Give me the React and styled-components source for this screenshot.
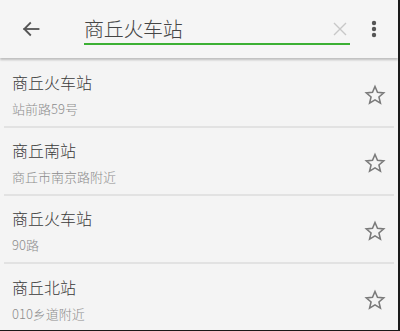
import React from 'react';
import styled, { createGlobalStyle } from 'styled-components';

const GlobalStyle = createGlobalStyle`
  html, body {
    margin: 0;
    padding: 0;
    background: #f4f4f4;
  }
  body {
    font-family: "Noto Sans CJK SC", "Noto Sans", Roboto, sans-serif;
  }
`;

const Screen = styled.div`
  width: 400px;
  height: 331px;
  box-sizing: border-box;
  background: #f4f4f4;
  border-right: 2px solid #1a1a1a;
  border-bottom: 1px solid #1a1a1a;
  overflow: hidden;
  display: flex;
  flex-direction: column;
`;

const Toolbar = styled.header`
  height: 58px;
  flex-shrink: 0;
  display: flex;
  align-items: center;
  background: #f5f5f5;
  box-shadow: 0 2px 2px rgba(0, 0, 0, 0.22);
  position: relative;
  z-index: 1;
`;

const IconButton = styled.button`
  border: 0;
  background: none;
  padding: 0;
  width: ${p => p.$w}px;
  height: 40px;
  display: flex;
  align-items: center;
  justify-content: center;
  color: #555;
  flex-shrink: 0;
`;

const SearchField = styled.div`
  flex: 1;
  height: 35px;
  margin: 0 0 3px 22px;
  display: flex;
  align-items: center;
  border-bottom: 2px solid #3cb034;
  box-sizing: border-box;
  padding-top: 4px;
`;

const SearchText = styled.span`
  flex: 1;
  font-size: 20px;
  font-weight: 300;
  color: #454545;
  letter-spacing: -0.3px;
`;

const ClearButton = styled.span`
  width: 14px;
  height: 14px;
  margin-right: 3px;
  display: flex;
  color: #c8c8c8;
`;

const List = styled.ul`
  list-style: none;
  margin: 2px 4px 0 4px;
  padding: 0;
  flex: 1;
`;

const Row = styled.li`
  height: 68px;
  box-sizing: border-box;
  display: flex;
  align-items: center;
  padding: 0 8px 0 8px;
  border-bottom: 2px solid #e2e2e2;
  &:last-child {
    border-bottom: 0;
  }
`;

const Texts = styled.div`
  flex: 1;
  display: flex;
  flex-direction: column;
  gap: 8px;
  padding-top: 3px;
`;

const Title = styled.div`
  font-size: 16px;
  font-weight: 300;
  line-height: 20px;
  color: #3a3a3a;
`;

const Subtitle = styled.div`
  font-size: 13px;
  font-weight: 300;
  line-height: 18px;
  color: #8c8c8c;
`;

const Star = styled.span`
  width: 22px;
  height: 22px;
  display: flex;
  color: #7a7a7a;
  margin-top: 4px;
`;

const BackArrow = () => (
  <svg width="20" height="20" viewBox="0 0 24 24" fill="none" stroke="currentColor" strokeWidth="2.2" strokeLinecap="square">
    <path d="M21 12H4" />
    <path d="M11 5l-7 7 7 7" />
  </svg>
);

const MoreDots = () => (
  <svg width="6" height="18" viewBox="0 0 6 18" fill="currentColor">
    <circle cx="3" cy="3" r="2.2" />
    <circle cx="3" cy="9" r="2.2" />
    <circle cx="3" cy="15" r="2.2" />
  </svg>
);

const ClearIcon = () => (
  <svg width="14" height="14" viewBox="0 0 14 14" stroke="currentColor" strokeWidth="1.4">
    <path d="M1 1l12 12M13 1L1 13" />
  </svg>
);

const StarIcon = () => (
  <svg width="22" height="22" viewBox="0 0 24 24" fill="none" stroke="currentColor" strokeWidth="1.7" strokeLinejoin="miter">
    <path d="M12 2.8l2.7 6.3 6.8.6-5.2 4.5 1.6 6.7L12 17.3l-5.9 3.6 1.6-6.7-5.2-4.5 6.8-.6z" />
  </svg>
);

const places = [
  { name: '商丘火车站', addr: '站前路59号' },
  { name: '商丘南站', addr: '商丘市南京路附近' },
  { name: '商丘火车站', addr: '90路' },
  { name: '商丘北站', addr: '010乡道附近' },
];

const App = () => (
  <Screen>
    <GlobalStyle />
    <Toolbar>
      <IconButton $w={62}>
        <BackArrow />
      </IconButton>
      <SearchField>
        <SearchText>商丘火车站</SearchText>
        <ClearButton>
          <ClearIcon />
        </ClearButton>
      </SearchField>
      <IconButton $w={48}>
        <MoreDots />
      </IconButton>
    </Toolbar>
    <List>
      {places.map((p, i) => (
        <Row key={i}>
          <Texts>
            <Title>{p.name}</Title>
            <Subtitle>{p.addr}</Subtitle>
          </Texts>
          <Star>
            <StarIcon />
          </Star>
        </Row>
      ))}
    </List>
  </Screen>
);

export default App;
